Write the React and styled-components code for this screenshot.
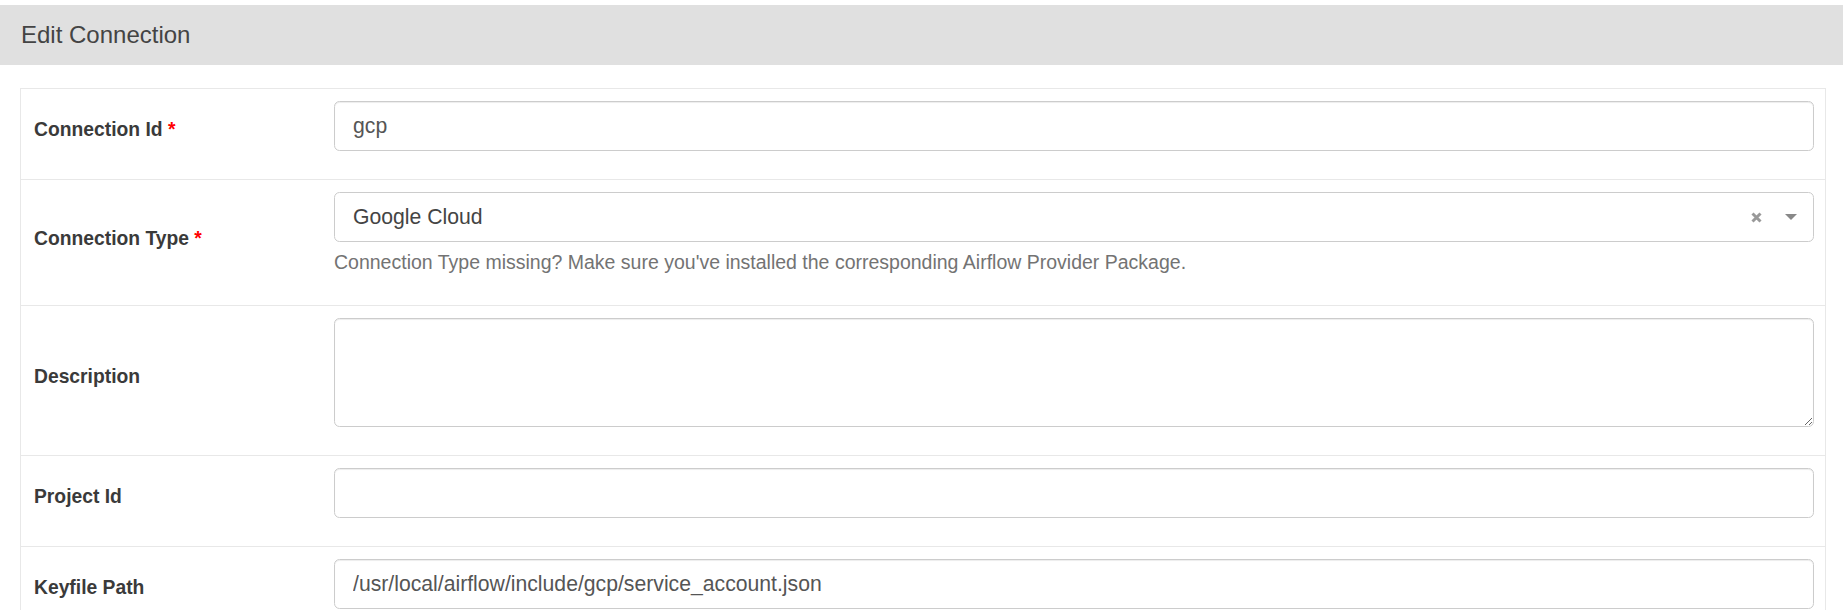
import React from "react";
import styled, {createGlobalStyle} from "styled-components";

const GlobalStyle = createGlobalStyle`
  body {
    margin: 0;
    background: #fff;
    font-family: "Liberation Sans", Arial, sans-serif;
    color: #333;
  }
  * {
    box-sizing: border-box;
  }
`;

const Page = styled.div`
  padding-top: 5px;
`;

const PanelHeading = styled.div`
  height: 60px;
  background-color: #e0e0e0;
  display: flex;
  align-items: center;
  padding-left: 21px;
  font-size: 24px;
  color: #444;
`;

const FormTable = styled.div`
  margin: 23px 17px 0 20px;
  border: 1px solid #e8e8e8;
`;

const Row = styled.div`
  display: grid;
  grid-template-columns: 300px 1fr;
  & + & {
    border-top: 1px solid #e8e8e8;
  }
`;

const LabelCell = styled.div`
  align-self: center;
  padding: 12px 13px 13px 13px;
`;

const Label = styled.label`
  display: block;
  margin-bottom: 7px;
  font-size: 19.3px;
  line-height: 27.6px;
  font-weight: bold;
  color: #3a3a3a;
`;

const Required = styled.strong`
  color: red;
`;

const FieldCell = styled.div`
  padding: 12px 11px 13px 13px;
`;

const Field = styled.div`
  margin-bottom: 15px;
`;

const Input = styled.input`
  display: block;
  width: 100%;
  height: 50px;
  padding: 0 18px;
  font-family: "Liberation Sans", Arial, sans-serif;
  font-size: 21.2px;
  color: #555;
  background: #fff;
  border: 1px solid #ccc;
  border-radius: 5.5px;
  box-shadow: inset 0 1px 1px rgba(0, 0, 0, 0.075);
  outline: none;
`;

const TextArea = styled.textarea`
  display: block;
  width: 100%;
  height: 109px;
  padding: 8px 18px;
  font-family: "Liberation Sans", Arial, sans-serif;
  font-size: 21.2px;
  color: #555;
  background: #fff;
  border: 1px solid #ccc;
  border-radius: 5.5px;
  box-shadow: inset 0 1px 1px rgba(0, 0, 0, 0.075);
  outline: none;
  resize: vertical;
`;

const Select = styled.div`
  height: 50px;
  display: flex;
  align-items: center;
  padding: 0 0 0 18px;
  border: 1px solid #ccc;
  border-radius: 5.5px;
  background: #fff;
  font-size: 21.2px;
  color: #444;
`;

const SelectValue = styled.span`
  flex: 1;
`;

const Clear = styled.span`
  width: 16px;
  display: flex;
  justify-content: center;
  margin-right: 21px;
`;

const Arrow = styled.span`
  width: 0;
  height: 0;
  border-left: 6px solid transparent;
  border-right: 6px solid transparent;
  border-top: 6px solid #888;
  margin-right: 16px;
`;

const Help = styled.div`
  margin-top: 6px;
  font-size: 19.5px;
  line-height: 29px;
  color: #737373;
`;

const ClearIcon = () => (
    <svg width="11" height="11" viewBox="0 0 11 11">
        <path d="M1.5 1.5 L9.5 9.5 M9.5 1.5 L1.5 9.5" stroke="#999" strokeWidth="3"/>
    </svg>
);

const FormRow = ({label, required, children}) => (
    <Row>
        <LabelCell>
            <Label>
                {label}
                {required && <Required> *</Required>}
            </Label>
        </LabelCell>
        <FieldCell>
            <Field>{children}</Field>
        </FieldCell>
    </Row>
);

const App = () => {
    return (
        <Page>
            <GlobalStyle/>
            <PanelHeading>Edit Connection</PanelHeading>
            <FormTable>
                <FormRow label="Connection Id" required>
                    <Input defaultValue="gcp"/>
                </FormRow>
                <FormRow label="Connection Type" required>
                    <Select>
                        <SelectValue>Google Cloud</SelectValue>
                        <Clear><ClearIcon/></Clear>
                        <Arrow/>
                    </Select>
                    <Help>
                        Connection Type missing? Make sure you've installed the corresponding Airflow Provider Package.
                    </Help>
                </FormRow>
                <FormRow label="Description">
                    <TextArea/>
                </FormRow>
                <FormRow label="Project Id">
                    <Input/>
                </FormRow>
                <FormRow label="Keyfile Path">
                    <Input defaultValue="/usr/local/airflow/include/gcp/service_account.json"/>
                </FormRow>
            </FormTable>
        </Page>
    );
};

export default App;
